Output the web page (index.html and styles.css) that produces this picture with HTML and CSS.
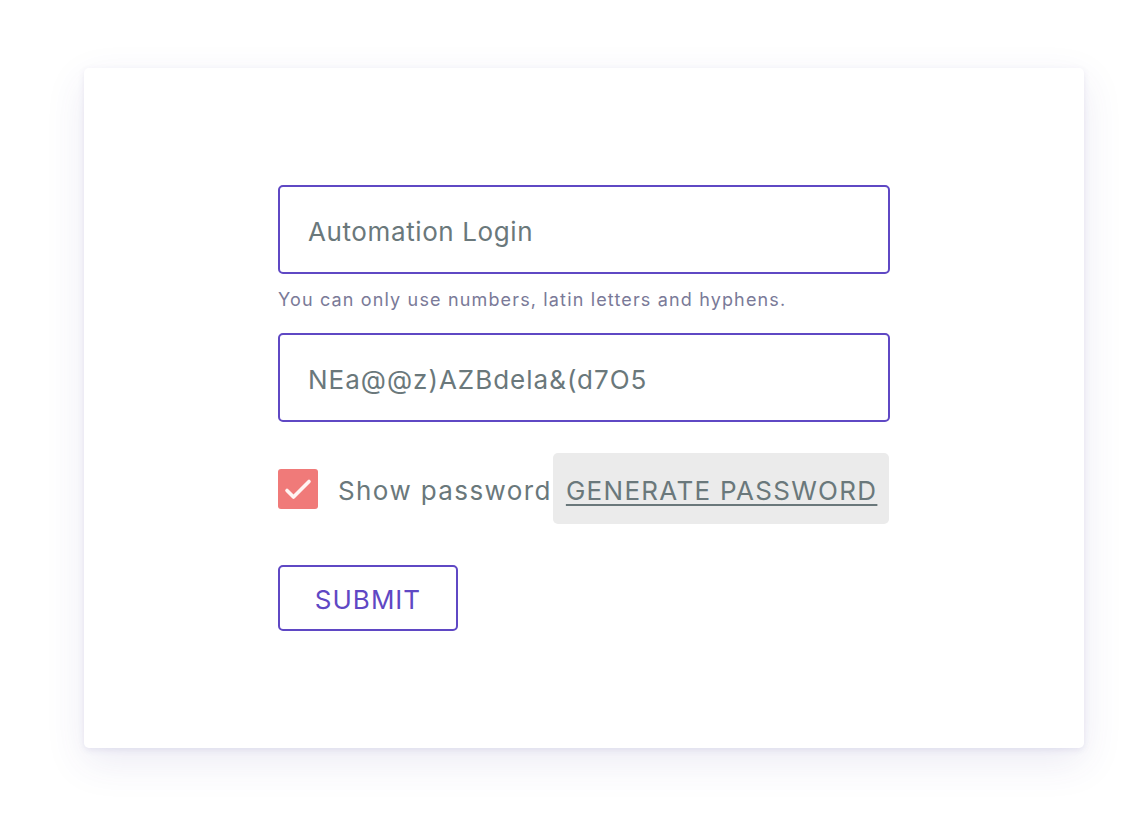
FILE: index.html
```html
<!DOCTYPE html>
<html>
<head>
<meta charset="utf-8">
<link rel="stylesheet" href="styles.css">
</head>
<body>
<div class="page">
  <div class="card">
    <form class="form">
      <div class="field">
        <div class="input login">Automation Login</div>
        <div class="hint">You can only use numbers, latin letters and hyphens.</div>
      </div>
      <div class="input pw">NEa@@z)AZBdela&amp;(d7O5</div>
      <div class="row">
        <span class="check">
          <svg width="40" height="40" viewBox="0 0 40 40"><path d="M9 21.5 L15.5 28 L31 12.5" fill="none" stroke="#fff4f2" stroke-width="3.6" stroke-linecap="round" stroke-linejoin="round"/></svg>
        </span>
        <span class="label">Show password</span>
        <span class="gen">GENERATE PASSWORD</span>
      </div>
      <div class="submit">SUBMIT</div>
    </form>
  </div>
</div>
</body>
</html>
```
FILE: styles.css
```css
* { box-sizing: border-box; }
html, body { margin: 0; padding: 0; background: #fff; }
body { font-family: Inter, "Noto Sans", sans-serif; }
.page { padding: 68px 0 76px 84px; min-height: 824px; }
.card {
  width: 1000px;
  height: 680px;
  background: #fff;
  border-radius: 5px;
  box-shadow: 0 2px 6px rgba(70, 60, 150, 0.10), 0 14px 40px rgba(70, 60, 150, 0.10);
  padding: 117px 194px;
}
.form { display: flex; flex-direction: column; }
.input {
  height: 89px;
  border: 2px solid #5f48c4;
  border-radius: 5px;
  padding: 3px 28px 0;
  display: flex;
  align-items: center;
  font-size: 26px;
  color: #6a787b;
}
.login { letter-spacing: 0.6px; }
.pw { margin-top: 22px; letter-spacing: 1px; }
.hint {
  margin-top: 15px;
  font-size: 18px;
  color: #7a7a98;
  letter-spacing: 1.15px;
  line-height: 22px;
}
.row {
  margin-top: 31px;
  display: flex;
  align-items: center;
  height: 71px;
}
.check {
  width: 40px; height: 40px;
  background: #f07a79;
  border-radius: 3px;
  display: block;
}
.check svg { display: block; }
.label {
  margin-left: 20px;
  font-size: 26px;
  color: #6a787b;
  letter-spacing: 1.4px;
  padding-top: 3px;
}
.gen {
  margin-left: 1px;
  height: 71px;
  padding: 3px 12px 0 13px;
  background: #ebebeb;
  border-radius: 5px;
  display: flex;
  align-items: center;
  font-size: 26px;
  color: #6a787b;
  text-decoration: underline;
  text-underline-offset: 4px;
  text-decoration-thickness: 2px;
  letter-spacing: 1.3px;
  white-space: nowrap;
}
.submit {
  margin-top: 41px;
  width: 180px;
  height: 66px;
  border: 2px solid #5f48c4;
  border-radius: 5px;
  display: flex;
  align-items: center;
  justify-content: center;
  padding-top: 3px;
  font-size: 26px;
  letter-spacing: 1px;
  color: #5f48c4;
}
```
